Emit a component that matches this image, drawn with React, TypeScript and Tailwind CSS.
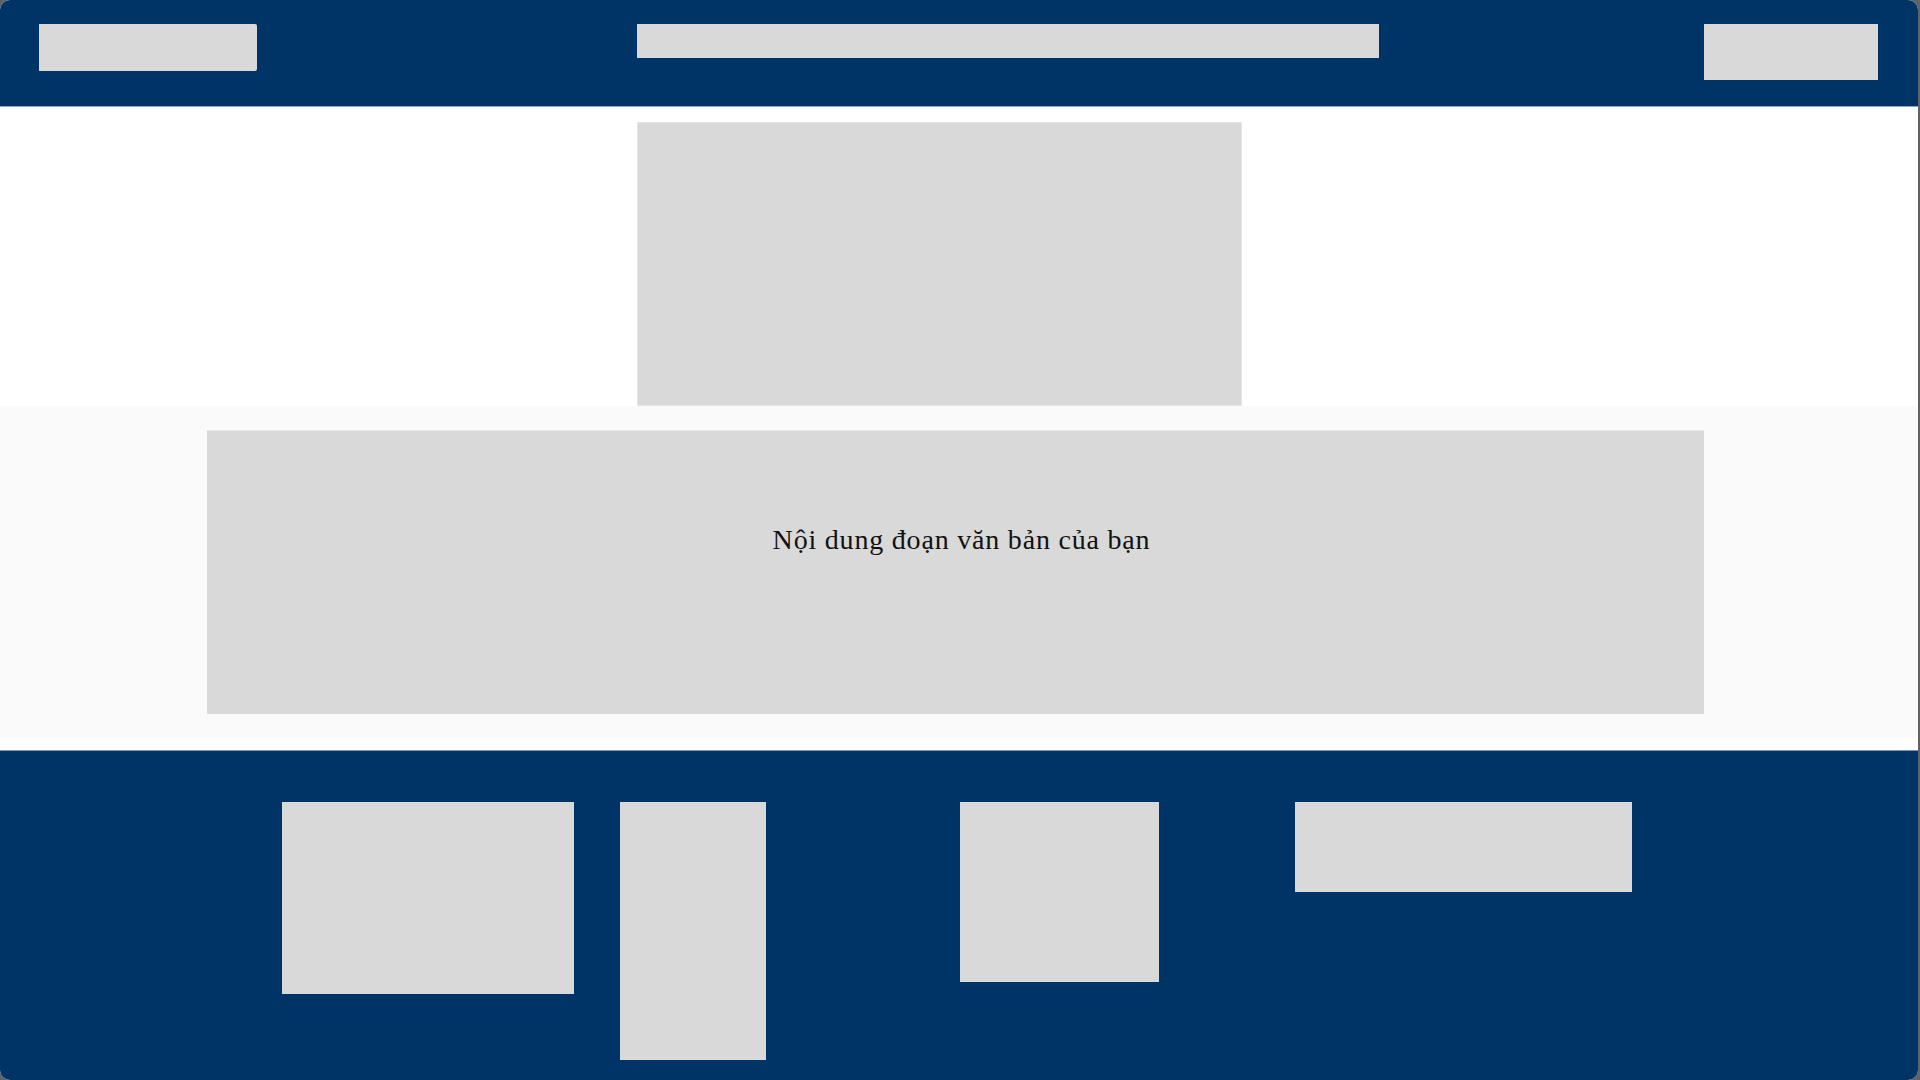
import React from "react";

function Block({ className }: { className: string }): React.JSX.Element {
  return <div className={`shrink-0 bg-[#d9d9d9] ${className}`} />;
}

export default function App(): React.JSX.Element {
  return (
    <div className="min-h-[1080px] w-[1920px] bg-[#5f6368]">
      <div className="w-[1918px] overflow-hidden rounded-[10px] bg-white">
        {/* header */}
        <header className="flex h-[107px] items-start border-b border-[#8ea6c4] bg-[#003366] pt-[24px]">
          <Block className="ml-[39px] h-[47px] w-[218px] rounded-r-[2px]" />
          <Block className="ml-[380px] h-[34px] w-[742px]" />
          <Block className="ml-[325px] h-[56px] w-[174px]" />
        </header>

        {/* hero */}
        <section className="h-[299px] bg-white pt-[15px]">
          <div className="ml-[637px] h-[284px] w-[605px] border border-[#e6e6e6] bg-[#d9d9d9]" />
        </section>

        {/* text block */}
        <section className="bg-[#fafafa] py-[24px]">
          <div className="ml-[207px] h-[284px] w-[1497px] border-t border-[#e8e8e8] bg-[#d9d9d9] pl-[12px] pt-[93px]">
            <p className="text-center font-['Liberation_Serif',serif] text-[28px] leading-[32px] tracking-[0.8px] text-[#111111]">
              Nội dung đoạn văn bản của bạn
            </p>
          </div>
        </section>

        <div className="h-[12px] bg-white" />

        {/* footer */}
        <footer className="h-[330px] border-t border-[#7f93aa] bg-[#003366] pt-[51px]">
          <div className="flex items-start">
            <Block className="ml-[282px] h-[192px] w-[292px]" />
            <Block className="ml-[46px] h-[258px] w-[146px]" />
            <Block className="ml-[194px] h-[180px] w-[199px]" />
            <Block className="ml-[136px] h-[90px] w-[337px]" />
          </div>
        </footer>
      </div>
    </div>
  );
}
